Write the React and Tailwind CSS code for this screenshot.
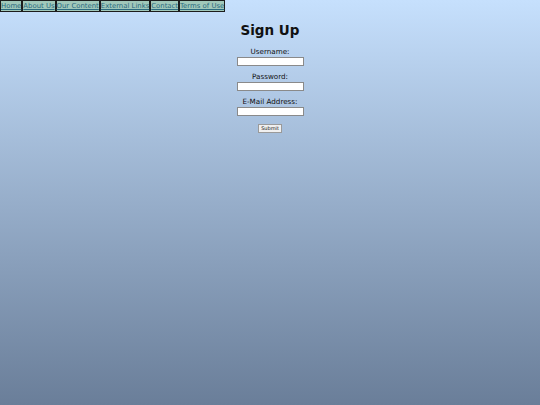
import React from "react";

const NAV = ["Home", "About Us", "Our Content", "External Links", "Contact", "Terms of Use"];

const Field = ({ label, type = "text" }) => (
  <div className="flex flex-col items-center">
    <label className="text-[7.2px] leading-[8px] text-[#111]">{label}</label>
    <input
      type={type}
      className="mt-[1px] h-[9px] w-[67px] border border-[#8a8a8a] bg-white"
    />
  </div>
);

export default function App() {
  return (
    <div
      className="min-h-[405px] w-full bg-gradient-to-b from-[#c6e0fd] to-[#6a7e99]"
      style={{ fontFamily: "'DejaVu Sans', Verdana, sans-serif" }}
    >
      {/* top nav */}
      <nav className="flex">
        {NAV.map((item) => (
          <a
            key={item}
            href="#"
            className="border border-[#1c1c1c] bg-[#a0c8ba] text-[6.9px] leading-[10px] text-[#2a6b80] underline"
          >
            {item}
          </a>
        ))}
      </nav>

      <main className="flex flex-col items-center">
        <h1 className="mt-[10px] text-[13.5px] font-bold leading-[16px] text-[#111]">Sign Up</h1>
        <form className="mt-[10px] flex flex-col items-center gap-[7px]">
          <Field label="Username:" />
          <Field label="Password:" type="password" />
          <Field label="E-Mail Address:" />
          <button
            type="button"
            className="mt-[1px] h-[9px] w-[24px] border border-[#9a9a9a] bg-[#f0f0f0] text-[5px] leading-[7px] text-[#111]"
          >
            Submit
          </button>
        </form>
      </main>
    </div>
  );
}
